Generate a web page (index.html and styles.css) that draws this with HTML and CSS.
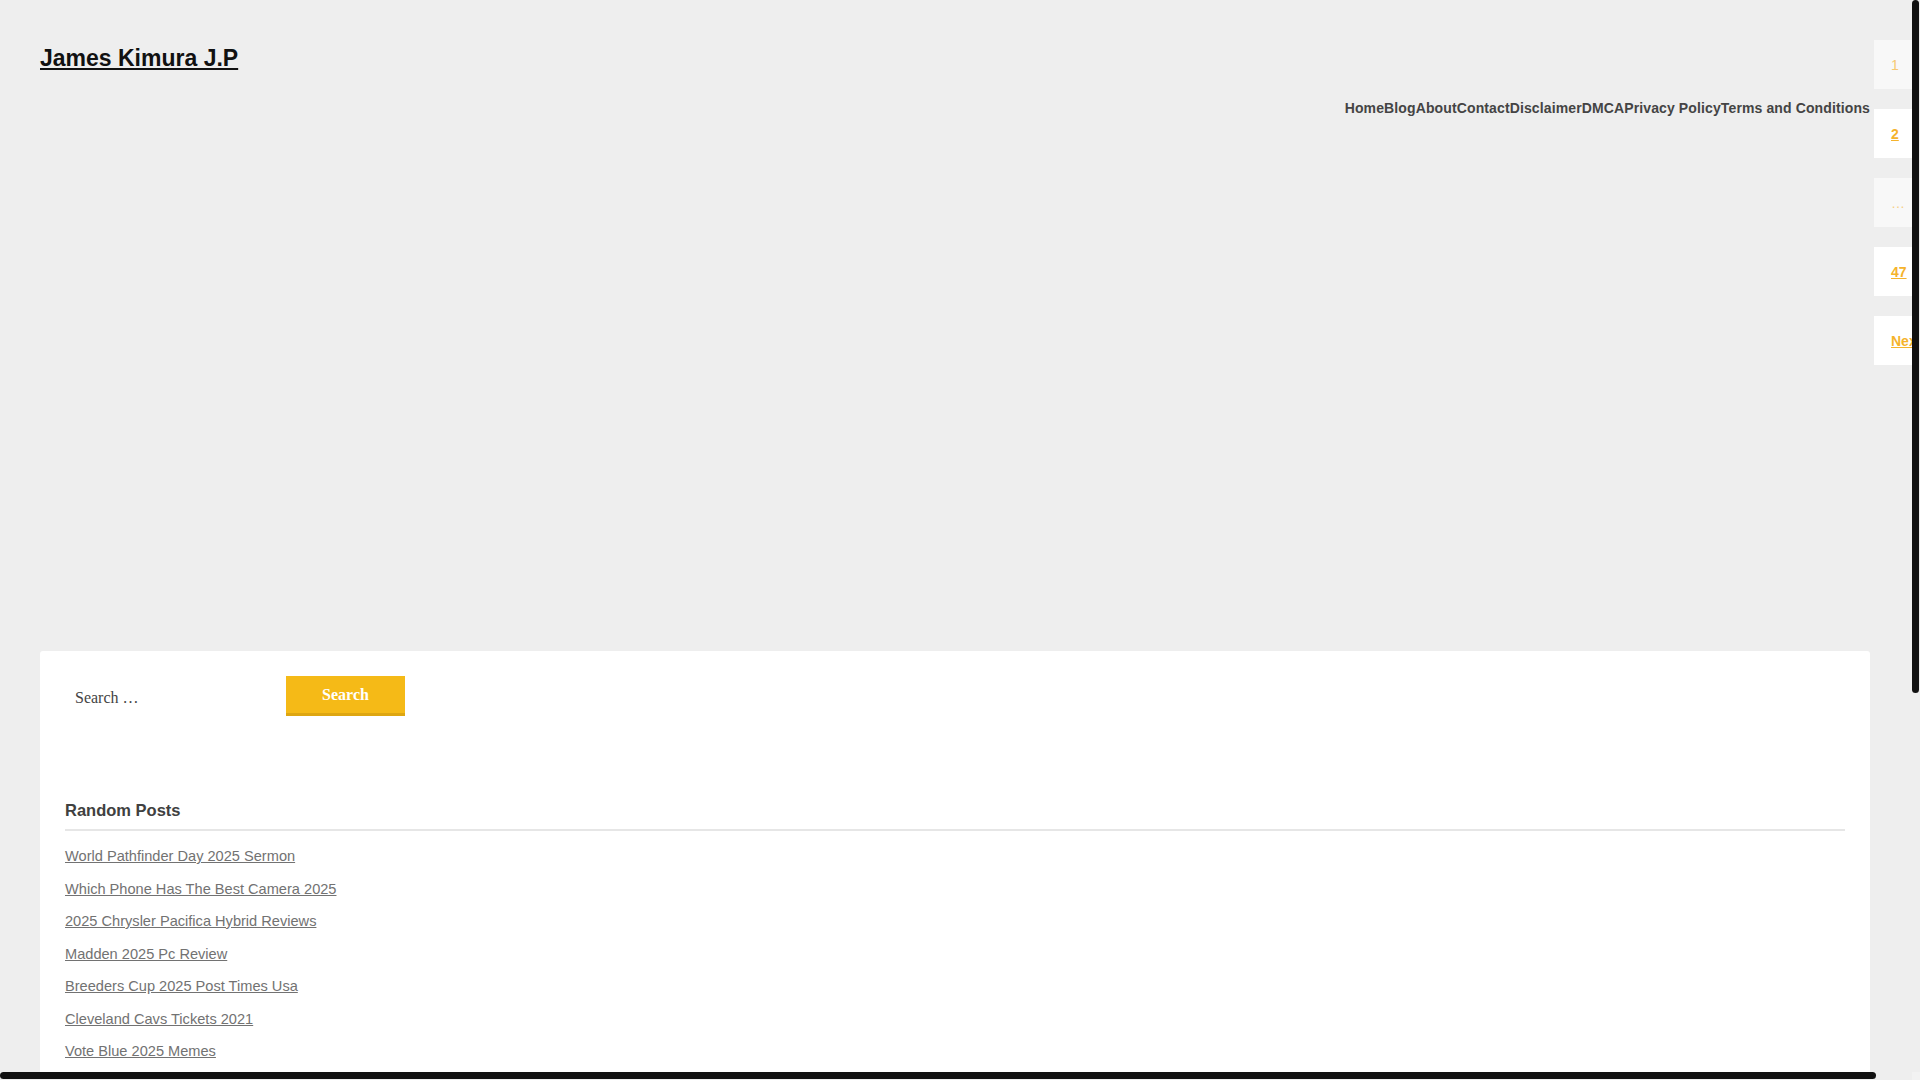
FILE: index.html
```html
<!DOCTYPE html>
<html lang="en">
<head>
<meta charset="utf-8">
<title>James Kimura J.P</title>
<link rel="stylesheet" href="styles.css">
</head>
<body>
<div class="page">
  <div class="main">
    <header class="site-header">
      <h1 class="site-title"><a href="#">James Kimura J.P</a></h1>
      <nav class="site-nav">
        <a href="#">Home</a><a href="#">Blog</a><a href="#">About</a><a href="#">Contact</a><a href="#">Disclaimer</a><a href="#">DMCA</a><a href="#">Privacy Policy</a><a href="#">Terms and Conditions</a>
      </nav>
    </header>
    <div class="ad-slot"></div>
    <section class="card">
      <form class="search-form">
        <input class="search-field" type="search" placeholder="Search …">
        <button class="search-submit" type="button">Search</button>
      </form>
      <h2 class="widget-title">Random Posts</h2>
      <ul class="post-list">
        <li><a href="#">World Pathfinder Day 2025 Sermon</a></li>
        <li><a href="#">Which Phone Has The Best Camera 2025</a></li>
        <li><a href="#">2025 Chrysler Pacifica Hybrid Reviews</a></li>
        <li><a href="#">Madden 2025 Pc Review</a></li>
        <li><a href="#">Breeders Cup 2025 Post Times Usa</a></li>
        <li><a href="#">Cleveland Cavs Tickets 2021</a></li>
        <li><a href="#">Vote Blue 2025 Memes</a></li>
      </ul>
    </section>
  </div>
  <ul class="pagination">
    <li class="page-box current"><span>1</span></li>
    <li class="page-box"><a href="#">2</a></li>
    <li class="page-box dots"><span>…</span></li>
    <li class="page-box"><a href="#">47</a></li>
    <li class="page-box"><a href="#">Next</a></li>
  </ul>
</div>
<div class="scrollbar scrollbar-v"><div class="scroll-thumb"></div></div>
<div class="scrollbar scrollbar-h"><div class="scroll-thumb"></div></div>
<div class="scroll-corner"></div>
</body>
</html>
```

FILE: styles.css
```css
html {
  background: #eeeeee;
}

body {
  margin: 0;
  background: #eeeeee;
  font-family: "Liberation Sans", Arial, sans-serif;
  color: #333333;
}

.page {
  display: flex;
  align-items: flex-start;
  width: max-content;
}

.main {
  width: 1830px;
  margin-left: 40px;
  margin-bottom: 40px;
}

.site-header {
  padding-top: 44px;
}

.site-title {
  margin: 0;
  font-size: 23px;
  line-height: 28px;
  font-weight: bold;
}

.site-title a {
  color: #111111;
  text-decoration: underline;
}

.site-nav {
  margin-top: 26px;
  display: flex;
  justify-content: flex-end;
  font-size: 14px;
  line-height: 20px;
  font-weight: bold;
  letter-spacing: 0.12px;
}

.site-nav a {
  color: #444444;
  text-decoration: none;
}

.ad-slot {
  height: 533px;
}

.card {
  box-sizing: border-box;
  min-height: 968px;
  background: #ffffff;
  border-radius: 3px;
  padding: 25px;
}

.search-form {
  display: flex;
  align-items: flex-start;
  margin: 0;
}

.search-field {
  box-sizing: border-box;
  width: 221px;
  height: 44px;
  padding: 0 10px;
  border: none;
  outline: none;
  background: #ffffff;
  font-family: "Liberation Serif", "Times New Roman", serif;
  font-size: 16px;
  color: #444444;
}

.search-field::placeholder {
  color: #444444;
  opacity: 1;
}

.search-submit {
  box-sizing: border-box;
  width: 119px;
  height: 40px;
  padding: 1px 0 0;
  border: none;
  border-bottom: 3px solid #dea611;
  background: #f5ba17;
  color: #ffffff;
  font-family: "Liberation Serif", "Times New Roman", serif;
  font-size: 16px;
  font-weight: bold;
}

.widget-title {
  margin: 80px 0 0;
  padding-bottom: 9px;
  border-bottom: 2px solid #e6e6e6;
  font-size: 16.5px;
  line-height: 20px;
  font-weight: bold;
  color: #404040;
}

.post-list {
  list-style: none;
  margin: 0;
  padding: 9px 0 0;
  font-size: 14.6px;
  line-height: 32.5px;
}

.post-list a {
  color: #727272;
  text-decoration: underline;
}

.pagination {
  list-style: none;
  margin: 40px 0 0 4px;
  padding: 0;
  display: flex;
  flex-direction: column;
  gap: 20px;
}

.page-box {
  box-sizing: border-box;
  width: 75px;
  height: 49px;
  padding-left: 17px;
  display: flex;
  align-items: center;
  background: #ffffff;
  font-size: 14px;
  font-weight: bold;
}

.page-box a {
  color: #f5b32c;
  text-decoration: underline;
}

.page-box.current,
.page-box.dots {
  background: #f8f8f8;
}

.page-box.current span {
  color: #f6c872;
  font-weight: normal;
}

.page-box.dots span {
  color: #f6cf85;
  font-weight: normal;
}

/* window scrollbars drawn over the page */
.scrollbar {
  position: fixed;
  background: #eeeeee;
  z-index: 10;
}

.scrollbar-v {
  top: 0;
  right: 0;
  width: 8px;
  bottom: 8px;
}

.scrollbar-h {
  left: 0;
  bottom: 0;
  height: 8px;
  right: 8px;
}

.scroll-thumb {
  background: #111111;
  border-radius: 4px;
}

.scrollbar-v .scroll-thumb {
  width: 7px;
  height: 693px;
}

.scrollbar-h .scroll-thumb {
  width: 1876px;
  height: 7px;
  margin-top: 0;
}

.scroll-corner {
  position: fixed;
  right: 0;
  bottom: 0;
  width: 8px;
  height: 8px;
  background: #f2f2f2;
  z-index: 10;
}
```
